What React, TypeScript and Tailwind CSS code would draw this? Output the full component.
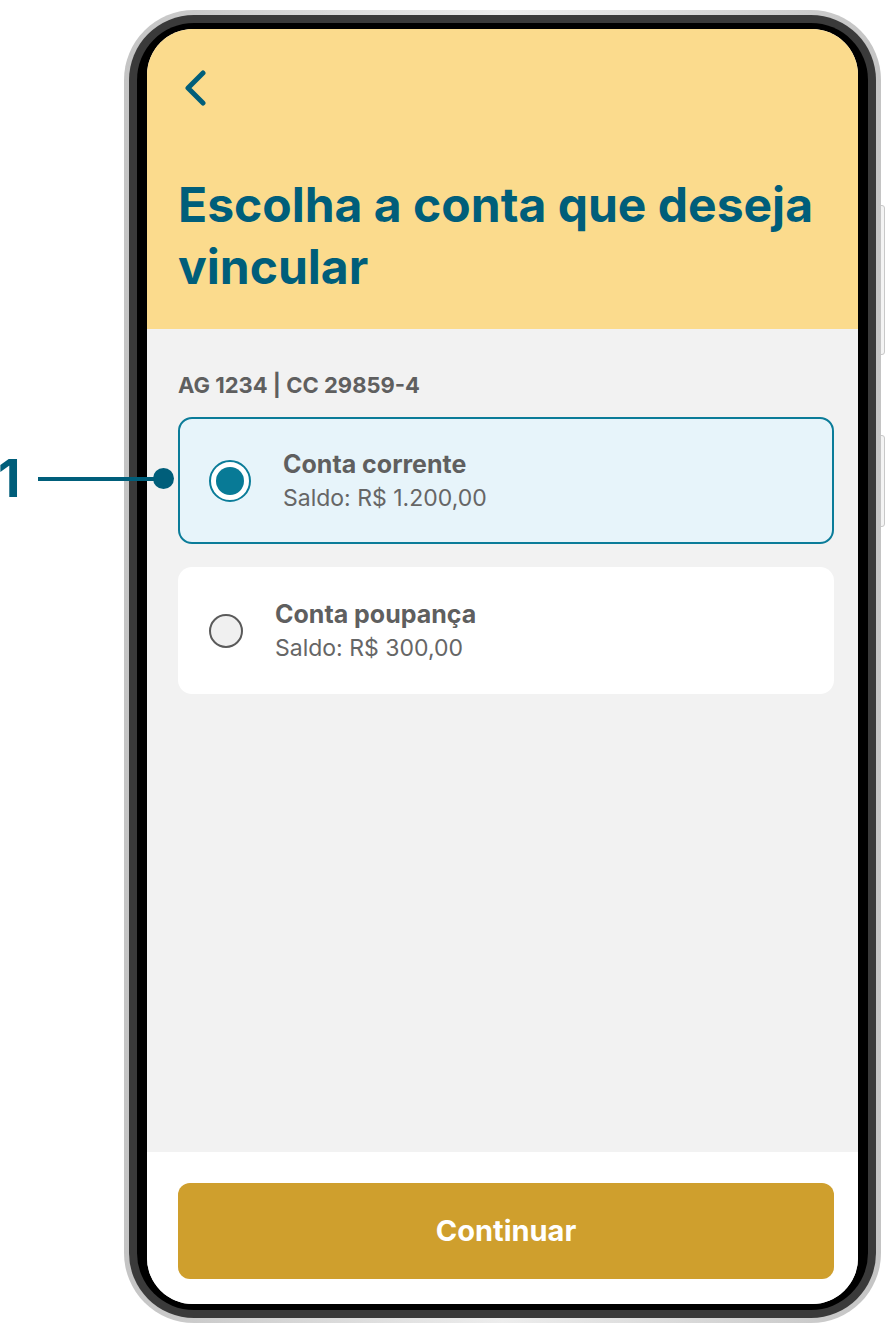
import { useState } from "react";

interface Account {
  id: string;
  name: string;
  balance: string;
}

const accounts: Account[] = [
  { id: "corrente", name: "Conta corrente", balance: "Saldo: R$ 1.200,00" },
  { id: "poupanca", name: "Conta poupança", balance: "Saldo: R$ 300,00" },
];

function Radio({ checked }: { checked: boolean }) {
  if (checked) {
    return (
      <span className="flex h-[42px] w-[42px] shrink-0 items-center justify-center rounded-full border-2 border-[#0b7c99] bg-white">
        <span className="h-[28px] w-[28px] rounded-full bg-[#087a96]" />
      </span>
    );
  }
  return (
    <span className="h-[34px] w-[34px] shrink-0 rounded-full border-2 border-[#5a5a5a] bg-[#f0f0f0]" />
  );
}

export default function App() {
  const [selected, setSelected] = useState("corrente");

  return (
    <div
      className="relative h-[1334px] w-[886px] bg-white"
      style={{ fontFamily: "Inter, Roboto, 'Liberation Sans', sans-serif" }}
    >
      {/* Side buttons */}
      <div className="absolute left-[879px] top-[205px] h-[150px] w-[6px] rounded-r-[3px] border border-[#c8c8c8] bg-[#f4f4f4]" />
      <div className="absolute left-[879px] top-[435px] h-[92px] w-[6px] rounded-r-[3px] border border-[#c8c8c8] bg-[#f4f4f4]" />

      {/* Phone frame */}
      <div className="absolute left-[124px] top-[10px] h-[1313px] w-[757px] rounded-[70px] bg-gradient-to-r from-[#c4c4c4] via-[#ededed] to-[#c4c4c4] p-[5px]">
        <div className="h-full w-full rounded-[65px] bg-[#3a3a3a] p-[8px]">
          <div className="h-full w-full rounded-[57px] bg-black px-[10px] py-[6px]">
            <div className="flex h-full w-full flex-col overflow-hidden rounded-[46px] bg-[#f2f2f2]">
              {/* Header */}
              <div className="flex h-[300px] shrink-0 flex-col bg-[#fbdb8d] pl-[31px] pr-[24px] pt-[41px]">
                <button className="ml-[5px] h-[34px] w-[24px]">
                  <svg width="24" height="36" viewBox="0 0 24 36" fill="none">
                    <polyline
                      points="20,3 5,18 20,33"
                      stroke="#005e7a"
                      strokeWidth="5"
                      strokeLinecap="round"
                      strokeLinejoin="round"
                    />
                  </svg>
                </button>
                <h1 className="mt-[70px] text-[48px] font-bold leading-[62px] text-[#005e7a]">
                  Escolha a conta que deseja vincular
                </h1>
              </div>

              {/* Body */}
              <div className="flex flex-1 flex-col pl-[31px] pr-[24px] pt-[43px]">
                <p className="text-[22px] font-bold leading-[26px] text-[#5f5f5f]">
                  AG 1234 | CC 29859-4
                </p>
                <div className="mt-[19px] flex flex-col gap-[23px]">
                  {accounts.map((acc) => {
                    const isSel = selected === acc.id;
                    return (
                      <button
                        key={acc.id}
                        onClick={() => setSelected(acc.id)}
                        className={`flex h-[127px] items-center rounded-[14px] text-left ${
                          isSel
                            ? "border-2 border-[#0b7c99] bg-[#e7f4fa] pl-[29px]"
                            : "bg-white pl-[31px]"
                        }`}
                      >
                        <Radio checked={isSel} />
                        <div className="ml-[32px] flex flex-col">
                          <span className="text-[25px] font-bold leading-[34px] text-[#5f5f5f]">
                            {acc.name}
                          </span>
                          <span className="text-[23px] leading-[34px] text-[#666666]">
                            {acc.balance}
                          </span>
                        </div>
                      </button>
                    );
                  })}
                </div>
              </div>

              {/* Footer */}
              <div className="flex h-[152px] shrink-0 flex-col bg-white pl-[31px] pr-[24px] pt-[31px]">
                <button className="flex h-[96px] items-center justify-center rounded-[12px] bg-[#cf9f2d] text-[29px] font-bold text-white">
                  Continuar
                </button>
              </div>
            </div>
          </div>
        </div>
      </div>

      {/* Annotation */}
      <span className="absolute -left-[2px] top-[449px] z-10 text-[52px] font-bold leading-[60px] text-[#005e7a]">
        1
      </span>
      <span className="absolute left-[38px] top-[477px] z-10 h-[4px] w-[118px] bg-[#005e7a]" />
      <span className="absolute left-[153px] top-[468px] z-10 h-[21px] w-[21px] rounded-full bg-[#005e7a]" />
    </div>
  );
}
